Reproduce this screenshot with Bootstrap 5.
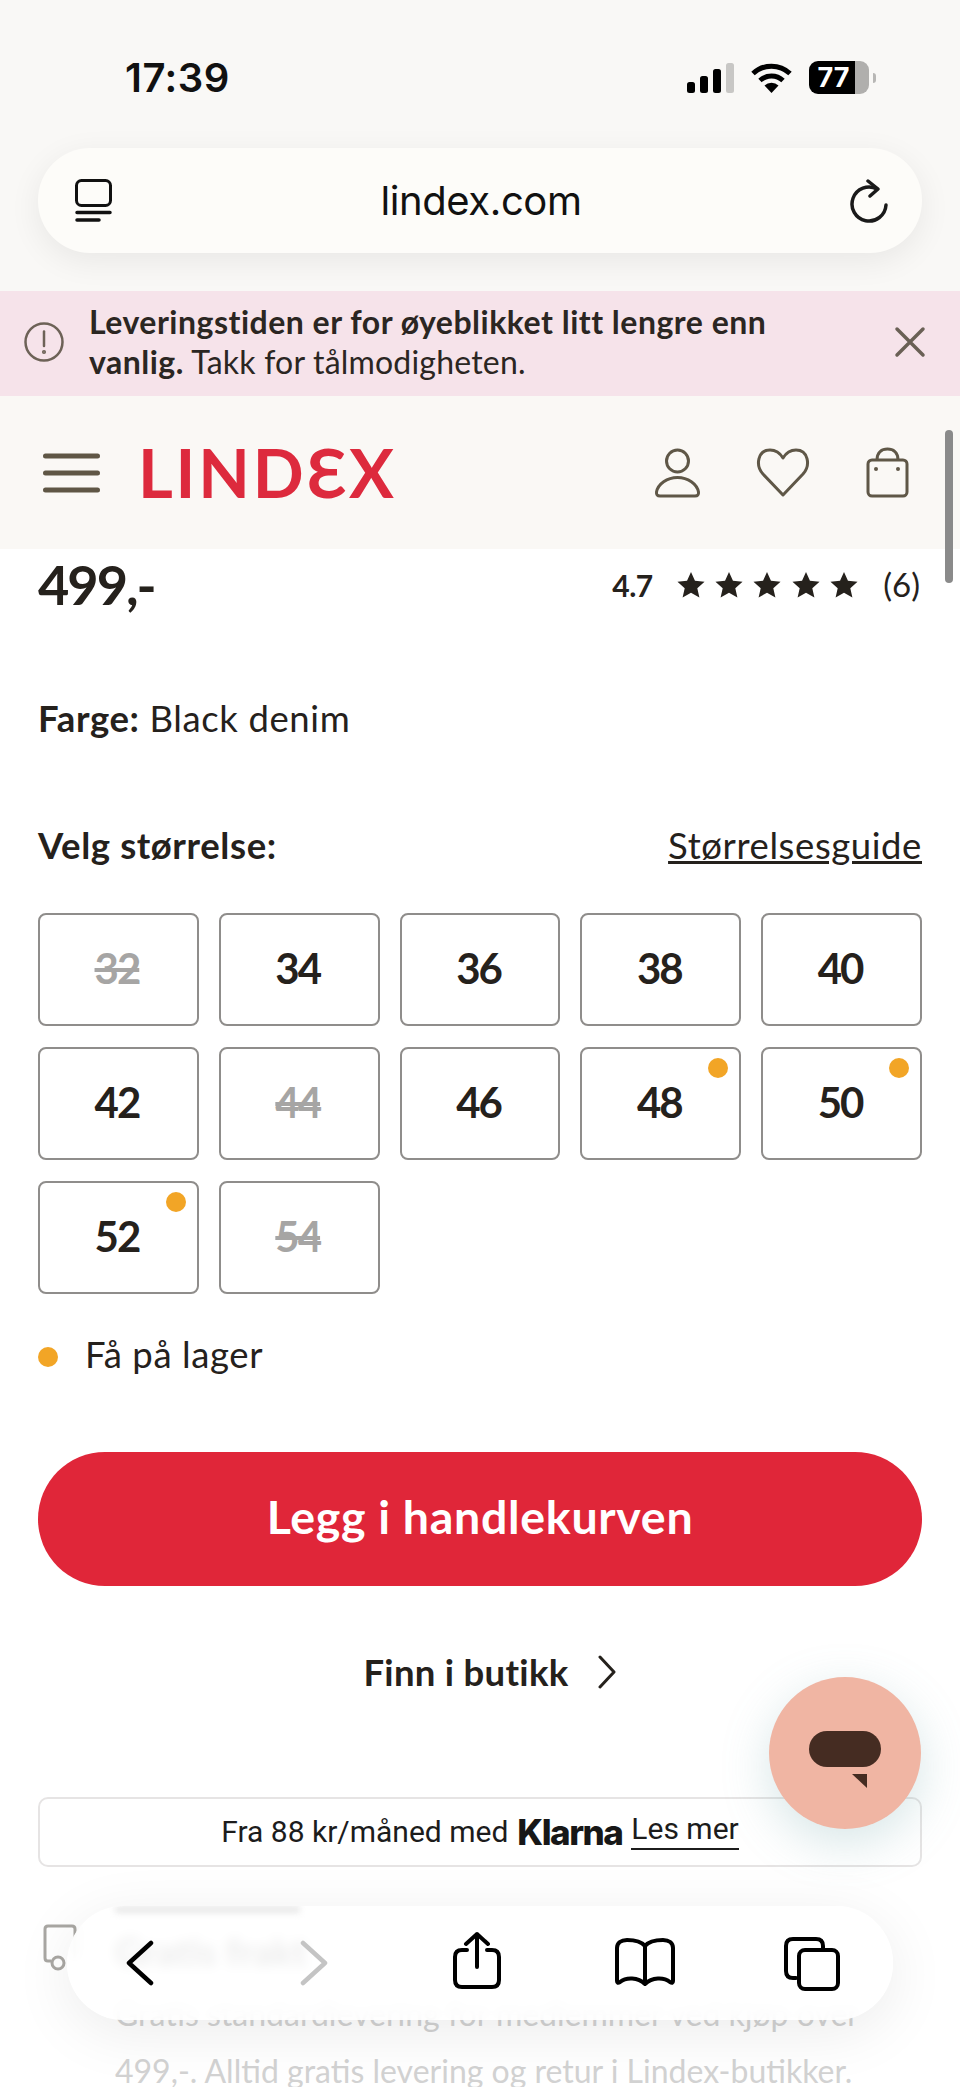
<!DOCTYPE html>
<html lang="no">

<head>
  <meta charset="utf-8">
  <meta name="viewport" content="width=device-width">
  <title>Lindex</title>
  <link href="https://cdn.jsdelivr.net/npm/bootstrap@5.3.3/dist/css/bootstrap.min.css" rel="stylesheet" />
  <style>
    html, body { margin: 0; }
    body { width: 960px; height: 2087px; overflow: hidden; position: relative; background: #fff; color: #25211c; font-family: Lato, "Liberation Sans", sans-serif; }

    /* phone chrome */
    .top-chrome { height: 291px; background: #f9f8f6; padding: 0 38px; }
    .status-row { height: 148px; padding: 61px 0 0 87px; }
    .clock { font: 600 40px/34px Inter, sans-serif; color: #111; letter-spacing: .5px; }
    .status-icons { gap: 17px; margin-right: 46px; }
    .batt { width: 60px; height: 33px; border-radius: 9px; overflow: hidden; font: 700 27px/33px Inter, sans-serif; color: #fff; }
    .batt-on { width: 46px; background: #000; text-align: center; padding-left: 3px; }
    .batt-off { width: 14px; background: #b0afad; }
    .batt-nib { width: 3px; height: 10px; background: #b8b7b5; border-radius: 0 3px 3px 0; margin-left: -16px; }
    .addr { height: 105px; border-radius: 52px; background: #fdfcf9; box-shadow: 0 8px 32px rgba(0,0,0,.07); padding: 0 34px 0 37px; }
    .addr-text { font: 400 40px/1 Inter, sans-serif; color: #111; letter-spacing: -.4px; }

    .notice { height: 105px; background: #f6e3ea; padding: 0 24px 3px; border-radius: 0; border: 0; margin: 0; }
    .notice-text { font-size: 32px; line-height: 40px; margin-left: 25px; width: 720px; color: #2b2622; letter-spacing: .2px; }
    .notice-text strong { letter-spacing: .5px; }
    .notice-close { margin-left: auto; margin-right: 10px; }

    .site-head { height: 153px; background: #faf8f5; padding: 0 50px 0 43px; }
    .logo-text { font: 700 67px/1 Lato, sans-serif; color: #dd2a3d; margin-left: 38px; letter-spacing: 2.800px; }
    .head-icons { gap: 54px; }

    /* product */
    .product { padding: 0 38px; }
    .price-row { height: 72px; }
    .price-text { font-size: 54px; font-weight: 700; letter-spacing: -2px; line-height: 70px; }
    .rate-num { font-size: 30px; font-weight: 700; letter-spacing: -.5px; }
    .stars-wrap { gap: 10.400px; margin: 0 25px 0 24px; }
    .rate-count { font-size: 33px; margin-right: 2px; }
    .txt-line { font-size: 36.500px; line-height: 40px; letter-spacing: .6px; }
    .colour-line { margin-top: 77px; }
    .size-head { margin-top: 87px; }
    .size-link { color: #25211c; }
    .size-grid { display: grid; grid-template-columns: repeat(5, 1fr); gap: 21px 20px; margin-top: 48px; }
    .size-box { height: 113px; border: 2px solid #8f8d8b; border-radius: 8px; font-size: 42px; font-weight: 700; letter-spacing: -2px; padding: 0 3px 2px 0; }
    .size-out { color: #a6a5a4; text-decoration: line-through; text-decoration-thickness: 4px; }
    .few-dot { width: 20px; height: 20px; border-radius: 50%; background: #f2a526; }
    .size-box .few-dot { position: absolute; top: 9px; right: 11px; }
    .few-line { margin-top: 40px; }
    .few-line .few-dot { margin: 6px 27px 0 0; }
    .buy-btn { height: 134px; margin-top: 78px; background: #e02639; border: 0; font-size: 46.500px; font-weight: 700; color: #fff; letter-spacing: .7px; padding: 0 0 4px; }
    .store-line { margin-top: 66px; font-size: 36.500px; font-weight: 700; line-height: 40px; gap: 28px; margin-left: 20px; letter-spacing: .3px; }
    .klarna-box { height: 70px; margin-top: 105px; border: 2px solid #e6e4e4; border-radius: 10px; font: 400 30px/1 Roboto, sans-serif; gap: 9px; color: #1c1c1c; }
    .klarna-name { font: 800 35px/1 Inter, sans-serif; letter-spacing: -1.500px; color: #171717; }
    .klarna-link { color: #1c1c1c; text-decoration: none; border-bottom: 2px solid #1c1c1c; padding-bottom: 4px; }
    .perk { margin-top: 56px; margin-left: 5px; color: #d2d2d2; }
    .perk-body { margin-left: 32px; }
    .perk-title { font-size: 38px; font-weight: 700; line-height: 44px; margin-top: 6px; color: #777; }
    .perk-text { font-size: 32px; line-height: 57px; margin-top: 12px; white-space: nowrap; }

    /* things floating over the page */
    .scroll-thumb { position: absolute; left: 945px; top: 430px; width: 8px; height: 153px; border-radius: 4px; background: #8a8a8a; }
    .chat-fab { position: absolute; left: 769px; top: 1677px; width: 152px; height: 152px; border-radius: 50%; background: #f0b5a3; box-shadow: 0 14px 48px rgba(110,165,170,.28); }
    .chat-glyph { margin-top: 14px; }
    .tool-bar { position: absolute; left: 67px; top: 1906px; width: 826px; height: 114px; border-radius: 57px; background: rgba(255,255,255,.86); backdrop-filter: blur(6px); box-shadow: 0 12px 60px rgba(0,0,0,.08); overflow: hidden; }
    .tool-ghost { position: absolute; left: 48px; top: 0; width: 185px; height: 7px; background: #e8e8e8; filter: blur(3px); }
    .tool-icon { position: absolute; }
    .tool-back { left: 59px; top: 34px; }
    .tool-fwd { left: 233px; top: 34px; }
    .tool-share { left: 384px; top: 24px; }
    .tool-book { left: 547px; top: 31px; }
    .tool-tabs { left: 715px; top: 29px; }
  </style>
</head>

<body>
  <div class="top-chrome">
    <div class="status-row d-flex justify-content-between align-items-start">
      <span class="clock">17:39</span>
      <div class="status-icons d-flex align-items-center">
        <svg width="47" height="30" viewBox="0 0 47 30">
          <rect x="0" y="19" width="8" height="11" rx="2.500" fill="#000" />
          <rect x="13" y="13" width="8" height="17" rx="2.500" fill="#000" />
          <rect x="26" y="6" width="8" height="24" rx="2.500" fill="#000" />
          <rect x="39" y="0" width="8" height="30" rx="2.500" fill="#c8c7c5" />
        </svg>
        <svg width="41" height="30" viewBox="0 0 41 30" fill="none" stroke="#000">
          <path d="M2 10.500A27 27 0 0 1 39 10.500" stroke-width="5" />
          <path d="M9 17.500A17 17 0 0 1 32 17.500" stroke-width="5" />
          <path d="M20.500 30L13.500 22.500A10 10 0 0 1 27.500 22.500Z" fill="#000" stroke="none" />
        </svg>
        <div class="d-flex align-items-center">
          <div class="batt d-flex">
            <span class="batt-on">77</span>
            <span class="batt-off"></span>
          </div>
          <span class="batt-nib ms-1"></span>
        </div>
      </div>
    </div>
    <div class="addr d-flex align-items-center justify-content-between">
      <svg width="37" height="43" viewBox="0 0 37 43" fill="none" stroke="#111" stroke-linecap="round">
        <rect x="1.500" y="1.500" width="34" height="25" rx="5" stroke-width="3" />
        <path d="M2 33.500H35M2 41H24" stroke-width="3.500" />
      </svg>
      <span class="addr-text">lindex.com</span>
      <svg width="38" height="44" viewBox="0 0 38 44" fill="none" stroke="#1a1a1a" stroke-width="3.500" stroke-linecap="round" stroke-linejoin="round">
        <path d="M27 10A17 17 0 1 0 36 26" />
        <path d="M18 2L28 10L20 17" />
      </svg>
    </div>
  </div>

  <div class="notice alert d-flex align-items-center" role="alert">
    <svg width="40" height="40" viewBox="0 0 40 40" fill="none" stroke="#6d6257" stroke-width="2.500" stroke-linecap="round" class="flex-shrink-0">
      <circle cx="20" cy="20" r="18.500" />
      <path d="M20 9.500V24" />
      <circle cx="20" cy="30" r=".8" />
    </svg>
    <div class="notice-text"><strong>Leveringstiden er for øyeblikket litt lengre enn vanlig.</strong> Takk for tålmodigheten.</div>
    <svg class="notice-close flex-shrink-0" width="32" height="32" viewBox="0 0 32 32" stroke="#6a6055" stroke-width="3.500" stroke-linecap="round">
      <path d="M3 3L29 29M29 3L3 29" />
    </svg>
  </div>

  <header class="site-head navbar flex-nowrap justify-content-start align-items-center">
    <svg width="57" height="40" viewBox="0 0 57 40" stroke="#5f5645" stroke-width="5" stroke-linecap="round">
      <path d="M2.500 3H54.500M2.500 20H54.500M2.500 37H54.500" />
    </svg>
    <span class="logo-text">LINDƐX</span>
    <div class="head-icons d-flex align-items-center ms-auto">
      <svg width="47" height="51" viewBox="0 0 47 51" fill="none" stroke="#5f5747" stroke-width="3">
        <circle cx="23.500" cy="14" r="11" />
        <path d="M6 49H41Q45 49 44.500 45C43 37 34 30.500 23.500 30.500C13 30.500 4 37 2.500 45Q2 49 6 49Z" />
      </svg>
      <svg width="56" height="51" viewBox="0 0 56 51" fill="none" stroke="#5f5747" stroke-width="3" stroke-linejoin="round">
        <path d="M28 48L8 27C0 18 3 3 15 3C21 3 25 6 28 11C31 6 35 3 41 3C53 3 56 18 48 27Z" />
      </svg>
      <svg width="45" height="53" viewBox="0 0 45 53" fill="none" stroke="#5f5747" stroke-width="3">
        <rect x="3" y="14" width="39" height="36" rx="4" />
        <path d="M12 14C12 6 17 3 22.500 3C28 3 33 6 33 14" />
        <circle cx="11" cy="23" r="2" fill="#5f5747" stroke="none" />
        <circle cx="33" cy="23" r="2" fill="#5f5747" stroke="none" />
      </svg>
    </div>
  </header>

  <main class="product">
    <div class="price-row d-flex justify-content-between align-items-center">
      <span class="price-text">499,-</span>
      <div class="d-flex align-items-center">
        <span class="rate-num">4.7</span>
        <div class="stars-wrap d-flex" id="stars"></div>
        <span class="rate-count">(6)</span>
      </div>
    </div>

    <div class="txt-line colour-line"><strong>Farge:</strong> Black denim</div>

    <div class="txt-line size-head d-flex justify-content-between">
      <strong>Velg størrelse:</strong>
      <a href="#" class="size-link">Størrelsesguide</a>
    </div>

    <div class="size-grid" id="sizes"></div>

    <div class="txt-line few-line d-flex align-items-center">
      <span class="few-dot"></span>
      <span>Få på lager</span>
    </div>

    <button type="button" class="buy-btn btn rounded-pill w-100">Legg i handlekurven</button>

    <div class="store-line d-flex justify-content-center align-items-center">
      <span>Finn i butikk</span>
      <svg width="20" height="34" viewBox="0 0 20 34" fill="none" stroke="#25211c" stroke-width="3" stroke-linecap="round" stroke-linejoin="round">
        <path d="M3 2L17 17L3 32" />
      </svg>
    </div>

    <div class="klarna-box d-flex justify-content-center align-items-center">
      <span>Fra 88 kr/måned med</span>
      <span class="klarna-name">Klarna</span>
      <a href="#" class="klarna-link">Les mer</a>
    </div>

    <div class="perk d-flex align-items-start">
      <svg width="40" height="58" viewBox="0 0 40 58" fill="none" stroke="#a9a7a3" stroke-width="3" class="flex-shrink-0">
        <path d="M8 38H5Q2 38 2 35V6Q2 3 5 3H29Q32 3 32 6V35" />
        <circle cx="15" cy="40" r="6" />
      </svg>
      <div class="perk-body">
        <div class="perk-title">Gratis frakt</div>
        <div class="perk-text">Gratis standardlevering for medlemmer ved kjøp over<br>499,-. Alltid gratis levering og retur i Lindex-butikker.</div>
      </div>
    </div>
  </main>

  <div class="scroll-thumb"></div>

  <div class="chat-fab d-flex align-items-center justify-content-center">
    <svg class="chat-glyph" width="72" height="58" viewBox="0 0 72 58">
      <rect x="0" y="0" width="72" height="36" rx="18" fill="#452c22" />
      <path d="M43 43H58V57Z" fill="#452c22" />
    </svg>
  </div>

  <nav class="tool-bar">
    <div class="tool-ghost"></div>
    <svg class="tool-icon tool-back" width="28" height="46" viewBox="0 0 28 46" fill="none" stroke="#000" stroke-width="4.500" stroke-linecap="round" stroke-linejoin="round">
      <path d="M25 3L3 23L25 43" />
    </svg>
    <svg class="tool-icon tool-fwd" width="28" height="46" viewBox="0 0 28 46" fill="none" stroke="#c4c4c4" stroke-width="4.500" stroke-linecap="round" stroke-linejoin="round">
      <path d="M3 3L25 23L3 43" />
    </svg>
    <svg class="tool-icon tool-share" width="52" height="60" viewBox="0 0 52 60" fill="none" stroke="#000" stroke-width="4" stroke-linecap="round" stroke-linejoin="round">
      <path d="M16 20H11Q4 20 4 27V50Q4 57 11 57H41Q48 57 48 50V27Q48 20 41 20H36" />
      <path d="M26 37V4M15 14L26 4L37 14" />
    </svg>
    <svg class="tool-icon tool-book" width="62" height="52" viewBox="0 0 62 52" fill="none" stroke="#000" stroke-width="4" stroke-linecap="round" stroke-linejoin="round">
      <path d="M31 9C27 4 20 3 13 3C7 3 3 6 3 11V44Q3 47 6 45C12 40 24 40 31 47C38 40 50 40 56 45Q59 47 59 44V11C59 6 55 3 49 3C42 3 35 4 31 9V47" />
    </svg>
    <svg class="tool-icon tool-tabs" width="58" height="58" viewBox="0 0 58 58" fill="none" stroke="#000" stroke-width="4" stroke-linecap="round" stroke-linejoin="round">
      <rect x="17" y="15" width="39" height="39" rx="6" />
      <path d="M14 43H11Q4 43 4 36V11Q4 4 11 4H34Q41 4 41 11V14" />
    </svg>
  </nav>

  <script src="https://cdn.jsdelivr.net/npm/bootstrap@5.3.3/dist/js/bootstrap.bundle.min.js"></script>
  <script>
    const starPath = 'M12 .8L15.400 8.400L23.600 9.200L17.400 14.700L19.200 22.800L12 18.600L4.800 22.800L6.600 14.700L.4 9.200L8.600 8.400Z';
    const starsEl = document.querySelector('#stars');
    for (let i = 0; i < 5; i++) {
      starsEl.innerHTML += '<svg width="28" height="28" viewBox="0 0 24 24"><path d="' + starPath + '" fill="#25211c"/></svg>';
    }

    const sizes = [
      ['32', 'out'], ['34'], ['36'], ['38'], ['40'],
      ['42'], ['44', 'out'], ['46'], ['48', 'few'], ['50', 'few'],
      ['52', 'few'], ['54', 'out']
    ];
    const sizesEl = document.querySelector('#sizes');
    sizes.forEach(function (s) {
      const cls = s[1] === 'out' ? ' size-out' : '';
      const dot = s[1] === 'few' ? '<span class="few-dot"></span>' : '';
      sizesEl.innerHTML += '<div class="size-box position-relative d-flex align-items-center justify-content-center' + cls + '">' + s[0] + dot + '</div>';
    });
  </script>
</body>

</html>
